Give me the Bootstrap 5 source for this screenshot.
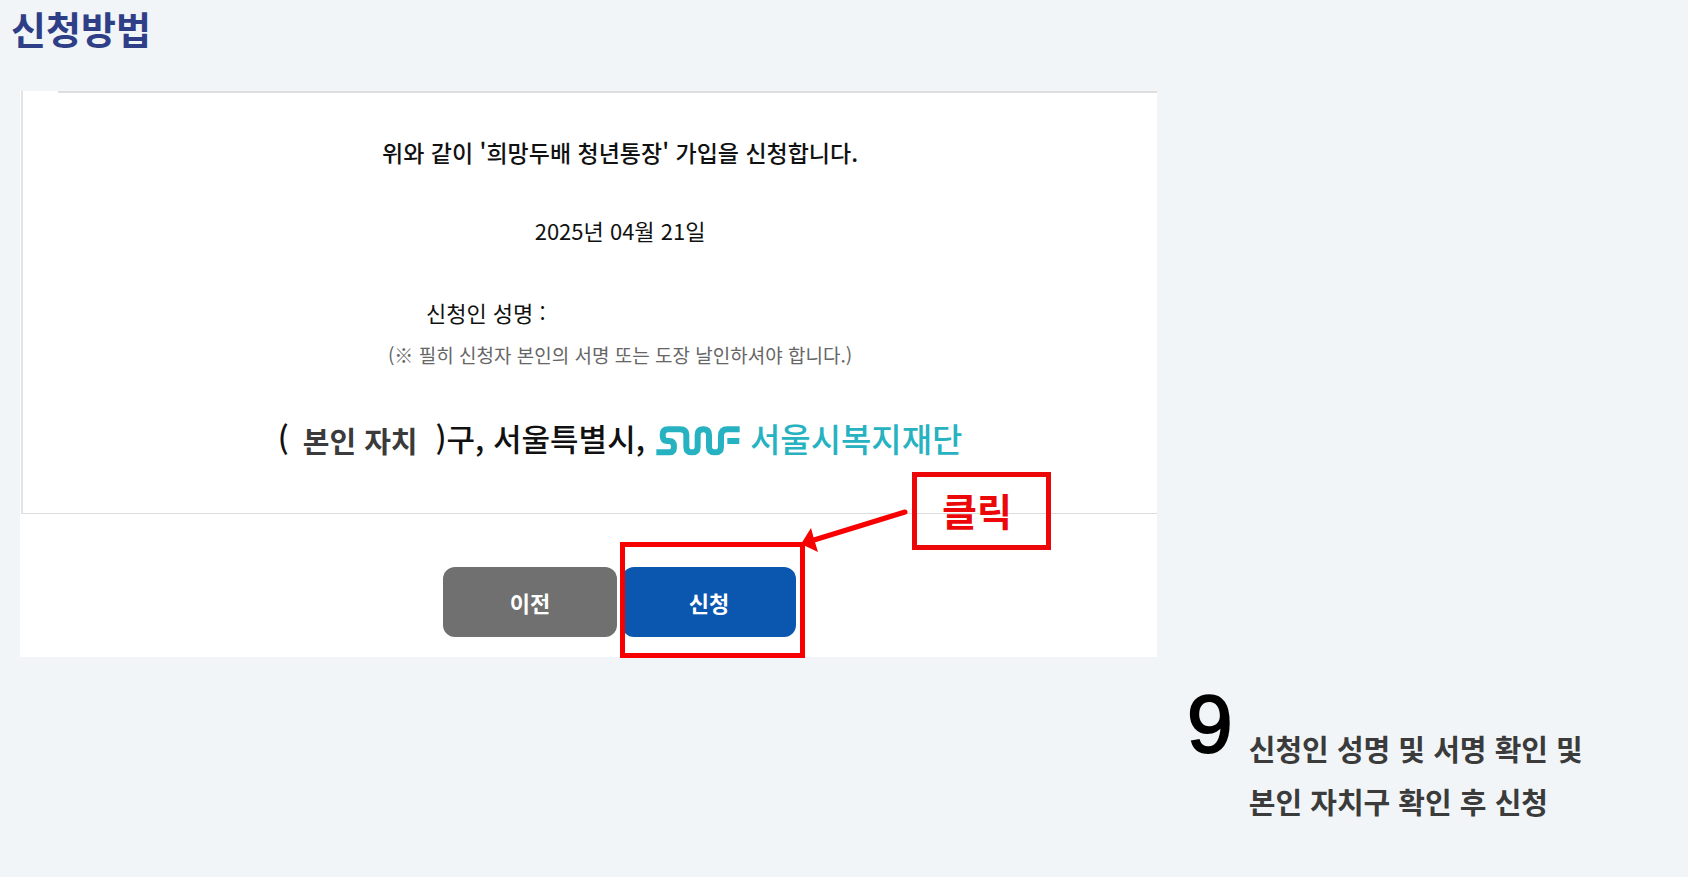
<!DOCTYPE html>
<html lang="ko">
<head>
<meta charset="utf-8">
<meta name="viewport" content="width=device-width, initial-scale=1">
<title>신청방법</title>
<link href="https://cdn.jsdelivr.net/npm/bootstrap@5.3.0/dist/css/bootstrap.min.css" rel="stylesheet">
<style>
  body { background: #f1f5f8; color: #111; font-family: "Noto Sans CJK KR", sans-serif; word-break: keep-all; }
  .page-title { color: #2f3f87; font-size: 38px; line-height: 56px; padding-left: 11px; margin-bottom: 35px; }
  .guide { display: grid; grid-template-columns: 69% 1fr; padding: 0 20px; }
  .screen { background: #fff; padding-bottom: 20px; }
  .sheet { border-left: 2px solid #e3e3e3; border-bottom: 1px solid #dcdcdc; margin-left: 1px; padding: 39px 0 49px 60px; position: relative; }
  .sheet::before { content: ""; position: absolute; top: 0; left: 35px; right: 0; border-top: 2px solid #dedede; }
  .declare { font-size: 23px; line-height: 44px; font-weight: 500; margin-bottom: 34px; }
  .date { font-size: 22px; line-height: 44px; margin-bottom: 38px; }
  .signer { font-size: 22px; line-height: 44px; padding-left: 38px; }
  .note { font-size: 19px; line-height: 42px; color: #666; }
  .parties { font-size: 31px; line-height: 48px; font-weight: 500; margin-top: 36px; }
  .district { font-size: 29px; font-weight: 700; color: #3b3b3b; padding: 4px 18px 0 14px; }
  .foundation { color: #27b2c2; font-size: 33px; gap: 10px; margin-left: 11px; }
  .foundation svg { margin-top: 6px; }
  .actions { gap: 5px; padding: 53px 0 0 62px; }
  .btn-step { width: 174px; height: 70px; border: 0; border-radius: 12px; color: #fff; font-size: 22px; font-weight: 700; }
  .btn-prev, .btn-prev:hover { background: #707070; color: #fff; }
  .btn-apply, .btn-apply:hover { background: #0b57b0; color: #fff; }
  .marker { position: absolute; left: -2px; top: -25px; width: 185px; height: 116px; border: 5px solid #f80000; pointer-events: none; }
  .pointer { position: absolute; left: 178px; top: -62px; }
  .callout { position: absolute; left: 290px; top: -95px; width: 139px; height: 78px; border: 5px solid #ec0808; color: #ec0808; font-size: 38px; line-height: 66px; font-weight: 700; padding-left: 25px; text-align: left; white-space: nowrap; }
  .step { grid-column: 2; grid-row: 2; padding-left: 30px; padding-top: 12px; gap: 16px; }
  .step-number { font-family: "Liberation Sans", sans-serif; font-size: 82px; line-height: 110px; -webkit-text-stroke: 2px #000; color: #000; }
  .step-text { font-size: 29px; line-height: 53px; font-weight: 700; color: #3b3b3b; padding-top: 53px; }
</style>
</head>
<body>
<h1 class="page-title fw-bold">신청방법</h1>
<main class="guide">
  <section class="screen">
    <div class="sheet d-flex flex-column align-items-center">
      <p class="declare">위와 같이 '희망두배 청년통장' 가입을 신청합니다.</p>
      <p class="date">2025년 04월 21일</p>
      <div>
        <p class="signer mb-0">신청인 성명 :</p>
        <p class="note mb-0">(※ 필히 신청자 본인의 서명 또는 도장 날인하셔야 합니다.)</p>
      </div>
      <div class="parties d-flex align-items-center">
        <span>(</span><span class="district">본인 자치</span><span>)구, 서울특별시,</span>
        <span class="foundation d-flex align-items-center">
          <svg width="84" height="30" viewBox="50 74 252 90" fill="none" stroke="#27b2c2" stroke-width="18" role="img" aria-label="SWF">
            <path d="M51 153H90Q104 153 104 136Q104 119 90 119H84Q70 119 70 101Q70 84 86 84H122Q141 84 141 101V136Q141 153 158 153Q175 153 175 136V101Q175 84 192 84Q209 84 209 101V136Q209 153 227 153Q245 153 245 136V104Q245 84 264 84H301M264 119H300"/>
          </svg>
          <span>서울시복지재단</span>
        </span>
      </div>
    </div>
    <div class="actions d-flex justify-content-center">
      <button type="button" class="btn btn-step btn-prev">이전</button>
      <div class="position-relative">
        <button type="button" class="btn btn-step btn-apply">신청</button>
        <span class="marker"></span>
        <svg class="pointer" width="112" height="52" viewBox="0 0 112 52" aria-hidden="true">
          <path d="M105 7L14 35" stroke="#f80000" stroke-width="5" stroke-linecap="round"/>
          <path d="M1 39L11 23L14 34L18 47Z" fill="#f80000"/>
        </svg>
        <span class="callout">클릭</span>
      </div>
    </div>
  </section>
  <section class="step d-flex align-items-start">
    <span class="step-number">9</span>
    <p class="step-text mb-0">신청인 성명 및 서명 확인 및<br>본인 자치구 확인 후 신청</p>
  </section>
</main>
<script src="https://cdn.jsdelivr.net/npm/bootstrap@5.3.0/dist/js/bootstrap.bundle.min.js"></script>
</body>
</html>
